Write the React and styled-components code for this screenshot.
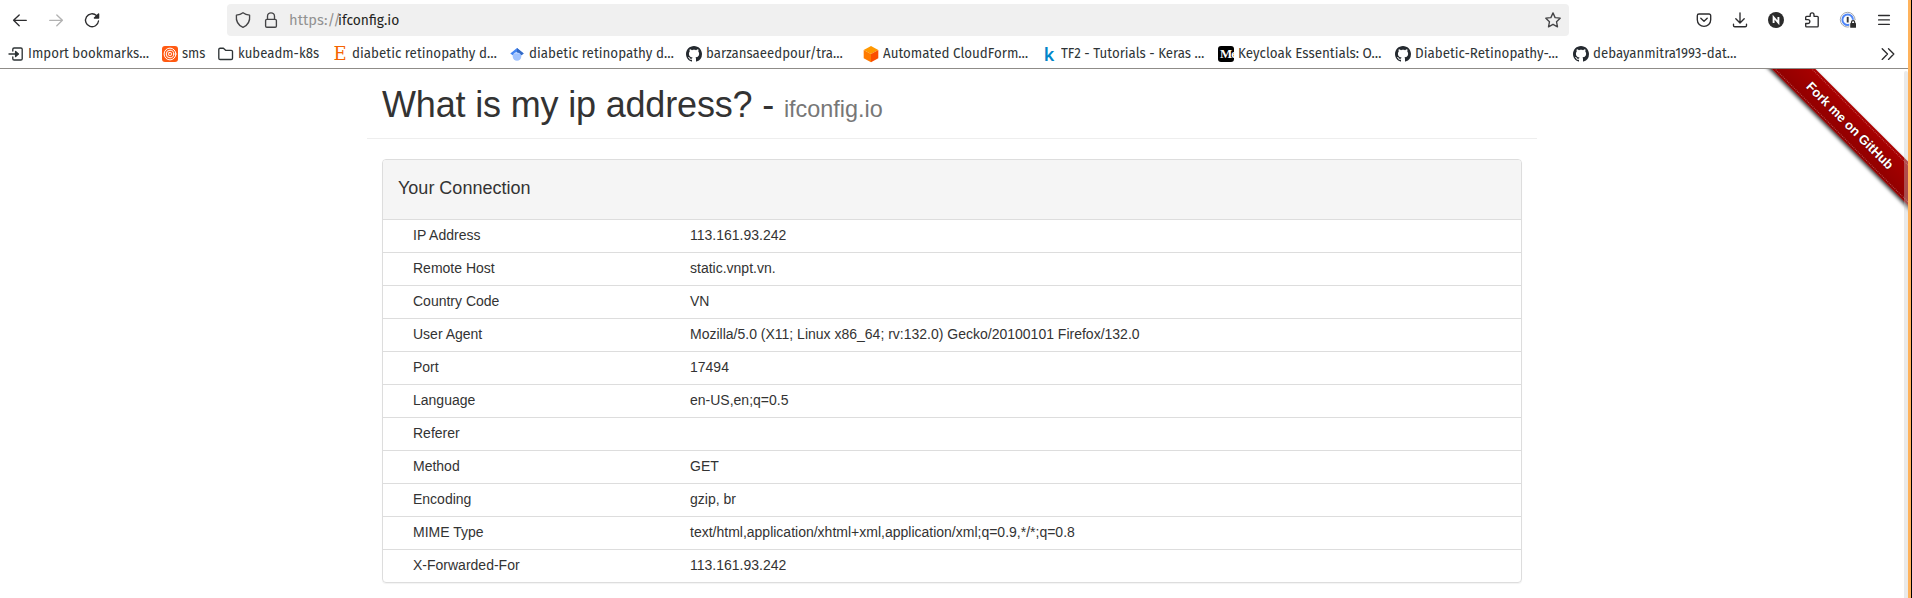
import React from "react";
import styled, { createGlobalStyle } from "styled-components";

const GlobalStyle = createGlobalStyle`
  *, *::before, *::after { box-sizing: border-box; }
  html, body { margin: 0; height: 100%; background: #fff; overflow: hidden; }
  body { font-family: "Liberation Sans", Arial, sans-serif; }
`;

const Window = styled.div`
  display: flex;
  width: 1912px;
  height: 598px;
  background: #000;
`;

const Main = styled.div`
  flex: 0 0 1908px;
  display: flex;
  flex-direction: column;
  background: #fff;
`;

const DesktopEdge = styled.div`
  flex: 0 0 3px;
  background: #ffb35c;
`;

/* ---------- Browser chrome ---------- */

const Chrome = styled.header`
  height: 69px;
  border-bottom: 1px solid #8f8c88;
  font-family: "Fira Sans", "Noto Sans", sans-serif;
  font-size: 14.3px;
  color: #2e3436;
`;

const NavBar = styled.nav`
  display: flex;
  align-items: center;
  height: 40px;
  padding: 0 16px 0 12px;
`;

const IconGroup = styled.div`
  display: flex;
  gap: 20px;
`;

const ToolButton = styled.button`
  display: flex;
  width: 16px;
  height: 16px;
  padding: 0;
  border: 0;
  background: none;
  color: ${(p) => (p.$muted ? "#b2b2b2" : "#2c2c2e")};
`;

const Glyph = styled.svg`
  display: block;
  flex: none;
  width: 16px;
  height: 16px;
  fill: none;
  stroke: currentColor;
  stroke-width: 1.35;
  stroke-linecap: round;
  stroke-linejoin: round;
  overflow: visible;
`;

const UrlBar = styled.div`
  display: flex;
  align-items: center;
  width: 1342px;
  height: 32px;
  margin: 0 127px 0 127px;
  padding: 0 8px;
  border-radius: 4px;
  background: #f0f0f0;
  color: #444446;
`;

const LeadingIcons = styled.div`
  display: flex;
  gap: 12px;
  width: 54px;
`;

const Squeezed = styled.span`
  display: block;
  flex: none;
  white-space: pre;
  transform: scaleX(${(p) => p.$ratio});
  transform-origin: left center;
`;

const Scheme = styled.div`
  width: 49px;
  color: #929292;
`;

const Host = styled.div`
  flex: 1;
  color: #1f1f21;
`;

const BookmarkBar = styled.div`
  display: flex;
  align-items: center;
  height: 28px;
  padding: 0 12px 0 8px;
`;

const Bookmark = styled.a`
  display: flex;
  align-items: center;
  gap: 4px;
  flex: none;
  width: ${(p) => p.$width}px;
`;

const BookmarkLabel = styled(Squeezed)`
  line-height: 26px;
`;

const Spacer = styled.div`
  flex: 1;
`;

/* ---------- Page ---------- */

const Viewport = styled.div`
  position: relative;
  flex: 1;
  padding-right: 4px;
  overflow: hidden;
  color: #333;
`;

const Container = styled.main`
  width: 1170px;
  margin: 0 auto;
`;

const PageHeader = styled.div`
  height: 70px;
  padding: 16px 15px 0;
  border-bottom: 1px solid #eee;
`;

const Title = styled.h1`
  margin: 0;
  font-size: 36px;
  font-weight: 400;
  line-height: 1.1;
  letter-spacing: -0.17px;
`;

const Subtitle = styled.small`
  font-size: 65%;
  letter-spacing: 0;
  color: #777;
`;

const Panel = styled.section`
  margin: 20px 15px;
  border: 1px solid #ddd;
  border-radius: 4px;
  box-shadow: 0 1px 1px rgba(0, 0, 0, 0.05);
`;

const PanelHeading = styled.div`
  height: 60px;
  padding: 19px 15px 0;
  border-bottom: 1px solid #ddd;
  border-radius: 3px 3px 0 0;
  background: #f5f5f5;
`;

const PanelTitle = styled.h3`
  margin: 0;
  font-size: 18px;
  font-weight: 400;
  line-height: 1.1;
`;

const InfoList = styled.dl`
  margin: 0;
`;

const InfoRow = styled.div`
  display: grid;
  grid-template-columns: 277px 1fr;
  height: 33px;
  padding: 5px 30px;
  border-bottom: 1px solid #ddd;
  font-size: 14px;
  line-height: 20px;

  &:last-child {
    height: 32px;
    border-bottom: 0;
  }
`;

const Term = styled.dt``;

const Value = styled.dd`
  margin: 0;
`;

const RibbonCorner = styled.a`
  position: absolute;
  top: 0;
  right: 0;
  width: 150px;
  height: 150px;
  overflow: hidden;
`;

const Ribbon = styled.div`
  position: absolute;
  top: 41px;
  left: -23px;
  display: flex;
  align-items: center;
  justify-content: center;
  width: 230px;
  height: 31px;
  transform: rotate(45deg);
  background: linear-gradient(#aa0000, #900000);
  box-shadow: 0 2px 4px rgba(0, 0, 0, 0.75);
  color: #fff;
  font-size: 13px;
  font-weight: 700;
  white-space: nowrap;
  text-shadow: 0 0 2px rgba(0, 0, 0, 0.5);

  &::after {
    content: "";
    position: absolute;
    inset: 2px 0;
    border: dotted rgba(255, 255, 255, 0.3);
    border-width: 1px 0;
  }
`;

const Scrollbar = styled.div`
  position: absolute;
  top: 2px;
  right: 0;
  bottom: 0;
  width: 4px;
  border-radius: 2px 2px 0 0;
  background: rgba(200, 200, 200, 0.38);
`;

/* ---------- Icons ---------- */

const Back = () => (
  <Glyph viewBox="0 0 16 16"><path d="M14.3 8.3H1.6M7.2 2.9 1.6 8.3l5.6 5.4" /></Glyph>
);
const Forward = () => (
  <Glyph viewBox="0 0 16 16"><path d="M1.7 8.3h12.7M8.8 2.9l5.6 5.4-5.6 5.4" /></Glyph>
);
const Reload = () => (
  <Glyph viewBox="0 0 16 16">
    <path d="M12.5 3.5A6.5 6.5 0 1 0 14.5 9" />
    <path d="M14.6 1.9v4.2h-4.2z" fill="currentColor" />
  </Glyph>
);
const Shield = () => (
  <Glyph viewBox="0 0 16 16">
    <path d="M8 .8C6.1 2.2 4 2.9 1.4 3.2.8 9 3.3 13.3 8 15.3c4.7-2 7.2-6.3 6.6-12.1C12 2.900 9.900 2.200 8 .8z" />
  </Glyph>
);
const Lock = () => (
  <Glyph viewBox="0 0 16 16">
    <rect x="2.6" y="7.3" width="10.8" height="7.9" rx="1.3" />
    <path d="M4.500 7.200V4.300a3.500 3.500 0 0 1 7 0v2.900" />
  </Glyph>
);
const Star = () => (
  <Glyph viewBox="0 0 16 16">
    <path d="m8 .9 2.100 4.700 5.100.6-3.700 3.500 1 5.100L8 12.300l-4.500 2.500 1-5.100L.8 6.200l5.100-.6z" />
  </Glyph>
);
const Pocket = () => (
  <Glyph viewBox="0 0 16 16">
    <path d="M3 2h10a1.700 1.700 0 0 1 1.700 1.700v4a6.700 6.700 0 0 1-13.400 0v-4A1.700 1.700 0 0 1 3 2z" />
    <path d="M4.800 6.300 8 9.300l3.200-3" />
  </Glyph>
);
const Download = () => (
  <Glyph viewBox="0 0 16 16">
    <path d="M8 .8v10M3.800 6.800 8 11l4.200-4.200M1.500 12.200v1.200c0 .8.500 1.300 1.300 1.300h10.400c.8 0 1.300-.5 1.300-1.300v-1.200" />
  </Glyph>
);
const Notion = () => (
  <Glyph viewBox="0 0 16 16">
    <circle cx="8" cy="8" r="8" fill="#2b2b2b" stroke="none" />
    <path d="M5.600 11V5.200l4.800 5.600V5" stroke="#fff" strokeWidth="1.9" strokeLinecap="butt" strokeLinejoin="miter" />
  </Glyph>
);
const Puzzle = () => (
  <Glyph viewBox="0 0 16 16">
    <path d="M1.700 6.800V5.200c0-.6.300-.9.900-.9h3.600V2.700a1.900 1.900 0 0 1 3.800 0v1.600h3.300c.6 0 .9.300.9.900v8.700c0 .6-.3.900-.9.900H2.600c-.6 0-.9-.3-.9-.9v-2.400h2.200a1.900 1.900 0 0 0 0-3.900H1.700z" />
  </Glyph>
);
const OnePassword = () => (
  <Glyph viewBox="0 0 16 16">
    <circle cx="7.7" cy="7.7" r="7.4" stroke="#a3a7ad" strokeWidth="1" />
    <circle cx="7.7" cy="7.7" r="5.3" stroke="#4f86f7" strokeWidth="2" />
    <path d="M7.700 4.900v5.600" stroke="#333" strokeWidth="1.9" strokeLinecap="butt" />
    <path d="M9.300 16.300V9.800l2-2h5v8.500z" fill="#fff" stroke="none" />
    <rect x="10.2" y="11.1" width="5.8" height="4.7" rx=".6" fill="#2b2b2b" stroke="none" />
    <path d="M11.500 11.200V10.300a1.600 1.600 0 0 1 3.200 0v.9" stroke="#2b2b2b" strokeWidth="1.2" />
  </Glyph>
);
const Menu = () => (
  <Glyph viewBox="0 0 16 16"><path d="M2.600 3.500h10.800M2.600 7.900h10.800M2.600 12.300h10.800" /></Glyph>
);
const Overflow = () => (
  <Glyph viewBox="0 0 16 16"><path d="m2.200 2.800 5.300 5.300-5.300 5.300M8.500 2.800l5.300 5.300-5.300 5.300" /></Glyph>
);
const ImportIcon = () => (
  <Glyph viewBox="0 0 16 16">
    <path d="M4.800 5V3.300c0-.8.500-1.300 1.300-1.300h6.800c.8 0 1.300.5 1.300 1.300v9.400c0 .8-.5 1.300-1.300 1.300H6.100c-.8 0-1.300-.5-1.300-1.300V11M1 8h9" />
    <path d="M7.600 5.400 10.300 8l-2.700 2.600z" fill="currentColor" />
  </Glyph>
);
const Sms = () => (
  <Glyph viewBox="0 0 16 16">
    <rect width="16" height="16" rx="3" fill="#ff5a12" stroke="none" />
    <circle cx="8" cy="8" r="5.9" stroke="#fff" strokeWidth="1" />
    <circle cx="8" cy="8" r="3.8" stroke="#fff" strokeWidth="1" />
    <rect x="6.6" y="6.6" width="2.8" height="2.8" rx=".6" stroke="#fff" strokeWidth="1" />
  </Glyph>
);
const Folder = () => (
  <Glyph viewBox="0 0 16 16">
    <path d="M.8 12.200V3.500c0-.8.500-1.300 1.300-1.300h3.300l2.200 2.100h5.600c.8 0 1.300.5 1.300 1.300v6.600c0 .8-.5 1.300-1.300 1.300H2.100c-.8 0-1.300-.5-1.300-1.300z" />
  </Glyph>
);
const Scholar = () => (
  <Glyph viewBox="0 0 16 16">
    <path d="M8 14.800a4.300 4.300 0 0 1-4.300-4.300V7.200h8.600v3.300A4.300 4.300 0 0 1 8 14.800z" fill="#a0c3ff" stroke="none" />
    <path d="M8 1.900 1.300 7.400l2.400 1.900a4.600 4.600 0 0 1 8.600 0l2.400-1.900z" fill="#4285f4" stroke="none" />
    <path d="M8 1.900v4.700c2 0 3.600 1 4.300 2.700l2.400-1.900z" fill="#356ac3" stroke="none" />
  </Glyph>
);
const GitHub = () => (
  <Glyph viewBox="0 0 16 16">
    <path
      fill="#24292f"
      stroke="none"
      d="M8 0C3.580 0 0 3.580 0 8c0 3.540 2.290 6.530 5.470 7.590.4.070.55-.17.55-.38 0-.19-.01-.82-.01-1.490-2.010.37-2.530-.49-2.690-.94-.09-.23-.48-.94-.82-1.130-.28-.15-.68-.52-.01-.53.63-.01 1.080.58 1.230.82.72 1.210 1.870.87 2.330.66.07-.52.28-.87.51-1.070-1.780-.2-3.640-.89-3.640-3.950 0-.87.31-1.590.82-2.150-.08-.2-.36-1.020.08-2.120 0 0 .67-.21 2.200.82.64-.18 1.320-.27 2-.27s1.360.09 2 .27c1.530-1.040 2.200-.82 2.200-.82.44 1.100.16 1.920.08 2.120.51.56.82 1.270.82 2.150 0 3.070-1.870 3.750-3.650 3.950.29.25.54.73.54 1.480 0 1.070-.01 1.930-.01 2.200 0 .21.15.46.55.38A8.010 8.010 0 0 0 16 8c0-4.420-3.580-8-8-8z"
    />
  </Glyph>
);
const Cube = () => (
  <Glyph viewBox="0 0 16 16">
    <path d="M8 0 .7 3.900 8 8l7.300-4.100z" fill="#ff9800" stroke="none" />
    <path d="M.7 3.900v8.400L8 16.200V8z" fill="#ff7a00" stroke="none" />
    <path d="M15.300 3.900v8.400L8 16.200V8z" fill="#fb4f00" stroke="none" />
  </Glyph>
);

const LetterMark = styled.span`
  display: flex;
  align-items: center;
  justify-content: center;
  flex: none;
  width: 16px;
  height: 16px;
  color: ${(p) => p.$color};
  font-family: ${(p) => p.$font};
  font-size: ${(p) => p.$size}px;
  font-weight: ${(p) => p.$weight || 400};
  line-height: 16px;
`;

const MediumMark = styled(LetterMark)`
  justify-content: flex-start;
  padding-left: 2px;
  overflow: hidden;
  border-radius: 3px;
  background: #000;
  letter-spacing: -1px;
`;

const SERIF = '"Liberation Serif", serif';
const SLAB = '"DejaVu Serif", serif';
const bookmarks = [
  { label: "Import bookmarks…", icon: <ImportIcon />, width: 154, ratio: 0.928 },
  { label: "sms", icon: <Sms />, width: 56, ratio: 0.915 },
  { label: "kubeadm-k8s", icon: <Folder />, width: 114, ratio: 0.923 },
  { label: "diabetic retinopathy d…", icon: <LetterMark $color="#f56400" $font={SLAB} $size={18}>E</LetterMark>, width: 177, ratio: 0.936 },
  { label: "diabetic retinopathy d…", icon: <Scholar />, width: 177, ratio: 0.936 },
  { label: "barzansaeedpour/tra…", icon: <GitHub />, width: 177, ratio: 0.927 },
  { label: "Automated CloudForm…", icon: <Cube />, width: 178, ratio: 0.935 },
  { label: "TF2 - Tutorials - Keras …", icon: <LetterMark $color="#0086c9" $font={'"Noto Sans", sans-serif'} $size={18} $weight={600}>k</LetterMark>, width: 177, ratio: 0.93 },
  { label: "Keycloak Essentials: O…", icon: <MediumMark $color="#fff" $font={SERIF} $size={13} $weight={700}>Me</MediumMark>, width: 177, ratio: 0.938 },
  { label: "Diabetic-Retinopathy-…", icon: <GitHub />, width: 178, ratio: 0.938 },
  { label: "debayanmitra1993-dat…", icon: <GitHub />, width: 178, ratio: 0.928 },
];

const connection = [
  ["IP Address", "113.161.93.242"],
  ["Remote Host", "static.vnpt.vn."],
  ["Country Code", "VN"],
  ["User Agent", "Mozilla/5.0 (X11; Linux x86_64; rv:132.0) Gecko/20100101 Firefox/132.0"],
  ["Port", "17494"],
  ["Language", "en-US,en;q=0.5"],
  ["Referer", ""],
  ["Method", "GET"],
  ["Encoding", "gzip, br"],
  ["MIME Type", "text/html,application/xhtml+xml,application/xml;q=0.9,*/*;q=0.8"],
  ["X-Forwarded-For", "113.161.93.242"],
];

export default function App() {
  return (
    <Window>
      <GlobalStyle />
      <Main>
        <Chrome>
          <NavBar>
            <IconGroup>
              <ToolButton><Back /></ToolButton>
              <ToolButton $muted><Forward /></ToolButton>
              <ToolButton><Reload /></ToolButton>
            </IconGroup>
            <UrlBar>
              <LeadingIcons>
                <Shield />
                <Lock />
              </LeadingIcons>
              <Scheme><Squeezed $ratio={1.03}>https://</Squeezed></Scheme>
              <Host><Squeezed $ratio={0.967}>ifconfig.io</Squeezed></Host>
              <Star />
            </UrlBar>
            <IconGroup>
              <ToolButton><Pocket /></ToolButton>
              <ToolButton><Download /></ToolButton>
              <ToolButton><Notion /></ToolButton>
              <ToolButton><Puzzle /></ToolButton>
              <ToolButton><OnePassword /></ToolButton>
              <ToolButton><Menu /></ToolButton>
            </IconGroup>
          </NavBar>
          <BookmarkBar>
            {bookmarks.map((b, i) => (
              <Bookmark key={i} $width={b.width}>
                {b.icon}
                <BookmarkLabel $ratio={b.ratio}>{b.label}</BookmarkLabel>
              </Bookmark>
            ))}
            <Spacer />
            <ToolButton><Overflow /></ToolButton>
          </BookmarkBar>
        </Chrome>
        <Viewport>
          <Container>
            <PageHeader>
              <Title>What is my ip address? - <Subtitle>ifconfig.io</Subtitle></Title>
            </PageHeader>
            <Panel>
              <PanelHeading>
                <PanelTitle>Your Connection</PanelTitle>
              </PanelHeading>
              <InfoList>
                {connection.map(([term, value]) => (
                  <InfoRow key={term}>
                    <Term>{term}</Term>
                    <Value>{value}</Value>
                  </InfoRow>
                ))}
              </InfoList>
            </Panel>
          </Container>
          <RibbonCorner>
            <Ribbon>Fork me on GitHub</Ribbon>
          </RibbonCorner>
          <Scrollbar />
        </Viewport>
      </Main>
      <DesktopEdge />
    </Window>
  );
}
